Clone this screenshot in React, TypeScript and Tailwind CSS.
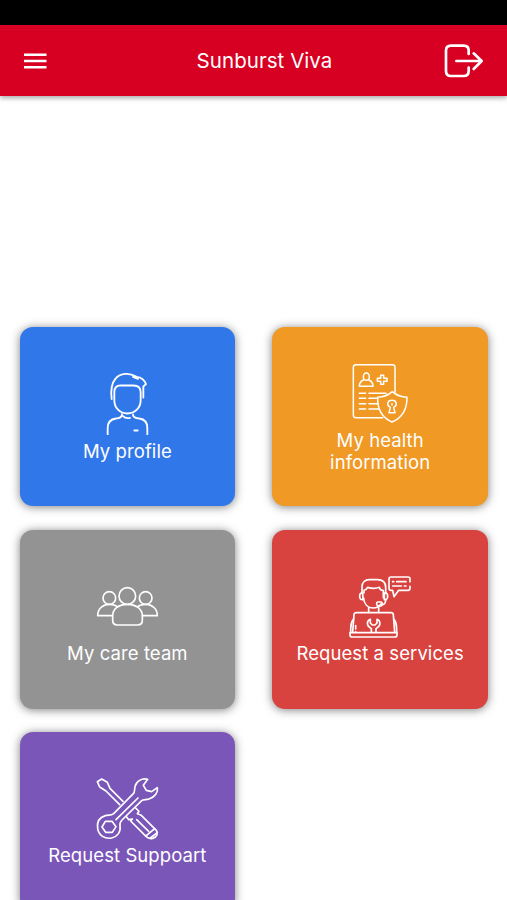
import type { ReactNode } from "react";

function ProfileIcon() {
  return (
    <svg width="45" height="67" viewBox="75 29.5 135 201" fill="none" stroke="currentColor" strokeWidth="5.5" strokeLinecap="round" strokeLinejoin="round">
      <path d="M95 117C92 92 94 70 106 56C122 38 147 37 170 50C183 51 193 59 198 72L190 79V112" />
      <path d="M159 50L174 56" />
      <path d="M103 120V96C103 84 109 76 121 76H161C174 76 182 84 182 97V120C182 143 165 160 142 160S103 143 103 120Z" />
      <path d="M83 222V204C83 186 92 177 108 175C120 174 126 170 126 162" />
      <path d="M159 163C159 171 165 174 178 175C194 177 202 187 202 204V222M128 167C134 173 141 175 150 173M163 211H173" />
    </svg>
  );
}

function HealthIcon() {
  return (
    <svg width="60" height="64" viewBox="91 32 180 192" fill="none" stroke="currentColor" strokeWidth="4.5" strokeLinecap="round" strokeLinejoin="round">
      <path d="M189 202H109Q101 202 101 194V51Q101 43 109 43H218Q226 43 226 51V126" />
      <ellipse cx="140" cy="79" rx="9" ry="11" />
      <path d="M133 88C124 91 119 97 119 108H160C160 97 155 91 146 88" />
      <path d="M183 75H192V84H202V93H192V102H183V93H173V84H183Z" />
      <path d="M119 129H138M148 129H199M119 144H138M148 144H174M119 160H138M148 160H173M119 176H138M148 176H177" />
      <path d="M218 124C207 134 192 140 174 141C173 178 188 203 217 215C248 203 262 179 262 141C244 140 229 134 218 124Z" />
      <path d="M212 171C200 166 202 150 217 150C232 150 234 166 222 171L226 187H208Z" />
      <path d="M217 160V164" />
    </svg>
  );
}

function TeamIcon() {
  return (
    <svg width="65" height="43" viewBox="105 45 195 129" fill="none" stroke="currentColor" strokeWidth="5" strokeLinecap="round" strokeLinejoin="round">
      <circle cx="202" cy="78" r="25" />
      <circle cx="148" cy="84" r="19" />
      <circle cx="257" cy="84" r="19" />
      <path d="M158 138C158 116 177 103 202 103S247 116 247 138V151Q247 165 233 165H172Q158 165 158 151Z" />
      <path d="M157 137H113C113 117 128 103 148 103C158 103 166 105 172 110M248 137H292C292 117 277 103 257 103C247 103 239 105 233 110" />
    </svg>
  );
}

function ServicesIcon() {
  return (
    <svg width="64" height="66" viewBox="175 26 192 198" fill="none" stroke="currentColor" strokeWidth="5" strokeLinecap="round" strokeLinejoin="round">
      <path d="M217 84V65C217 51 226 43 239 43H263C279 43 288 52 288 66V84" />
      <path d="M223 83V75C229 73 233 69 234 66C244 69 261 69 269 66C270 72 275 75 281 76V84M222 98C223 116 234 128 251 128C261 128 269 123 274 116M281 84V97" />
      <path d="M219 83C213 82 210 86 210 93S213 104 220 103ZM284 83C291 82 294 86 294 93S290 104 284 103Z" />
      <path d="M288 104C288 113 285 118 276 119M264 110H274C279 110 279 122 273 122H267C260 122 259 111 264 110Z" />
      <path d="M237 127V141M267 126V141" />
      <path d="M189 201L193 148Q194 142 200 142H304Q310 142 311 148L315 201" />
      <path d="M192 161C184 169 183 178 183 201M312 161C320 169 321 178 321 201M198 191V181M198 199V200" />
      <path d="M181 202H322V209Q322 215 316 215H187Q181 215 181 209Z" />
      <path d="M242 162C231 166 230 180 241 187L245 190V201M262 162C273 166 274 180 263 187L259 190V201M242 162V173L248 179H256L262 173V162" />
      <path d="M361 49V41Q361 35 355 35H304Q298 35 298 41V69Q298 75 304 75H309L313 94L327 75H355Q361 75 361 69V63" />
      <path d="M309 49H312M321 49H349M309 62H335M344 62H349" />
    </svg>
  );
}

function ToolsIcon() {
  return (
    <svg width="65" height="65" viewBox="165 32 195 195" fill="none" stroke="currentColor" strokeWidth="5" strokeLinecap="round" strokeLinejoin="round">
      <path d="M239 118L198 77L179 65L172 49L185 41L202 51L210 69L249 108" />
      <path d="M323 42C306 37 288 48 285 64C283 73 285 80 280 85L221 145C213 152 206 148 196 151C179 156 170 170 173 190C176 210 195 222 215 218C233 214 243 199 240 182C239 174 240 170 246 164L305 106C310 101 318 104 327 101C345 96 355 80 352 67L335 79L319 75L310 60L323 42Z" />
      <path d="M196 168H216L228 184L217 201H197L186 185Z" />
      <path d="M228 163L294 98" />
      <path d="M287 128L297 138L292 145L304 150L349 195C356 204 350 216 338 219C330 221 324 219 318 213L272 167L277 161L266 163L260 155" />
      <path d="M290 163L326 198M319 211L344 190M331 218L352 202" />
    </svg>
  );
}

type TileProps = { color: string; icon: ReactNode; label: ReactNode; spacing: string };

function Tile({ color, icon, label, spacing }: TileProps) {
  return (
    <button className={`flex h-[179px] flex-col items-center rounded-[13px] text-center text-[18.5px] leading-[22px] tracking-[0.08px] shadow-[0_1px_10px_rgba(0,0,0,0.5)] ${color} ${spacing}`}>
      {icon}
      <span className="whitespace-nowrap">{label}</span>
    </button>
  );
}

export default function App() {
  return (
    <div className="h-[900px] overflow-hidden bg-white font-['Inter','Liberation_Sans',sans-serif] text-white">
      <div className="h-[25px] bg-black" />
      <header className="grid h-[71px] grid-cols-[1fr_auto_1fr] items-center bg-[#d80022] pr-[23px] pl-6 shadow-[0_2px_5px_rgba(0,0,0,0.35)]">
        <button aria-label="Menu" className="justify-self-start">
          <svg width="23" height="18" viewBox="0 0 23 18" stroke="currentColor" strokeWidth="2.4">
            <path d="M0 2.8H22.5M0 9H22.5M0 15.2H22.5" />
          </svg>
        </button>
        <h1 className="pt-[2px] pl-[21px] text-[20.5px] tracking-[0.05px]">Sunburst Viva</h1>
        <button aria-label="Log out" className="justify-self-end">
          <svg width="40" height="34" viewBox="570 131 120 102" fill="none" stroke="currentColor" strokeWidth="8" strokeLinecap="round" strokeLinejoin="round">
            <path d="M644 161V151Q644 136 629 136H591Q576 136 576 151V212Q576 227 591 227H629Q644 227 644 212V202M607 182H682M659 159L683 182L659 206" />
          </svg>
        </button>
      </header>
      <main className="grid grid-cols-2 gap-x-[37px] gap-y-[23.4px] pt-[231.4px] pr-[19px] pl-[19.5px]">
        <Tile color="bg-[#3077e9]" icon={<ProfileIcon />} label="My profile" spacing="gap-[3px] pt-[42.5px]" />
        <Tile color="bg-[#f09924]" icon={<HealthIcon />} label={<>My health<br />information</>} spacing="gap-[3.6px] pt-[33.8px]" />
        <Tile color="bg-[#939394]" icon={<TeamIcon />} label="My care team" spacing="gap-[14px] pt-[55px]" />
        <Tile color="bg-[#d8433f]" icon={<ServicesIcon />} label="Request a services" spacing="gap-[2px] pt-[44px]" />
        <Tile color="bg-[#7a56b8]" icon={<ToolsIcon />} label="Request Suppoart" spacing="gap-[3px] pt-[43.5px]" />
      </main>
    </div>
  );
}
